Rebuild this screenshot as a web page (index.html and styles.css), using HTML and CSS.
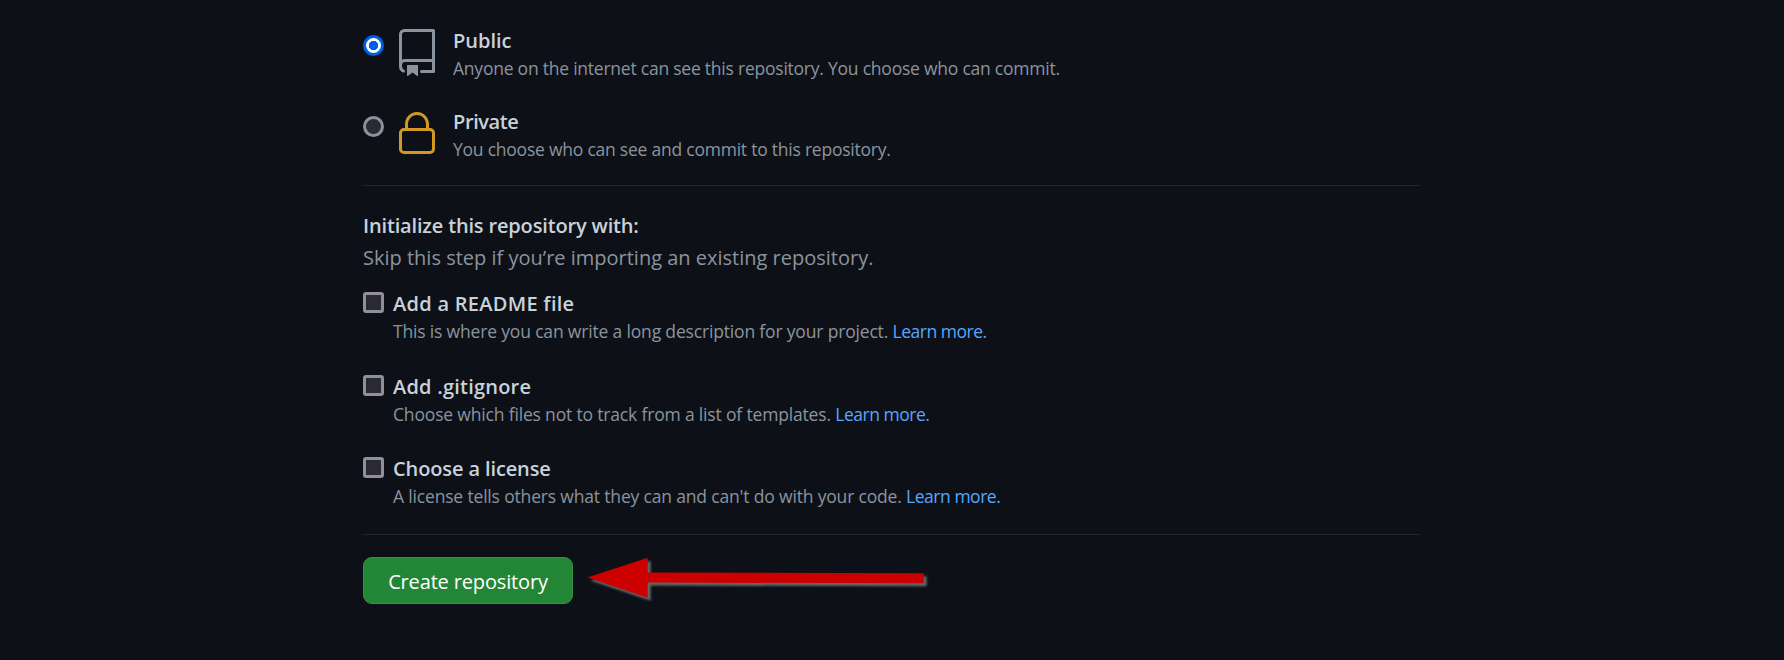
FILE: index.html
```
<!DOCTYPE html>
<html lang="en">
<head>
<meta charset="utf-8">
<title>Create a new repository</title>
<link rel="stylesheet" href="styles.css">
</head>
<body>
<main class="form">
  <section class="visibility">
    <label class="choice">
      <input class="radio" type="radio" name="visibility" checked>
      <svg class="icon icon-repo" viewBox="0 0 24 24" aria-hidden="true"><path fill-rule="evenodd" d="M3 2.75A2.75 2.75 0 015.75 0h14.5a.75.75 0 01.75.75v20.5a.75.75 0 01-.75.75h-6a.75.75 0 010-1.5h5.25v-4H6A1.5 1.5 0 004.5 18v.75c0 .716.43 1.334 1.05 1.605a.75.75 0 01-.6 1.374A3.25 3.25 0 013 18.75v-16zM19.5 1.5V15H6c-.546 0-1.059.146-1.5.401V2.75c0-.69.56-1.25 1.25-1.25H19.5z"/><path d="M7 18.25a.25.25 0 01.25-.25h5a.25.25 0 01.25.25v5.01a.25.25 0 01-.397.201l-2.206-1.604a.25.25 0 00-.294 0L7.397 23.46a.25.25 0 01-.397-.2v-5.01z"/></svg>
      <span class="copy">
        <span class="title">Public</span>
        <span class="note">Anyone on the internet can see this repository. You choose who can commit.</span>
      </span>
    </label>
    <label class="choice">
      <input class="radio" type="radio" name="visibility">
      <svg class="icon icon-lock" viewBox="0 0 24 24" aria-hidden="true"><path fill-rule="evenodd" d="M6 9V7.25C6 3.845 8.503 1 12 1s6 2.845 6 6.25V9h.5a2.5 2.5 0 012.5 2.5v8a2.5 2.5 0 01-2.5 2.5h-13A2.5 2.5 0 013 19.5v-8A2.5 2.5 0 015.5 9H6zm1.5-1.75C7.5 4.58 9.422 2.5 12 2.5c2.578 0 4.5 2.08 4.5 4.75V9h-9V7.25zm-3 4.25a1 1 0 011-1h13a1 1 0 011 1v8a1 1 0 01-1 1h-13a1 1 0 01-1-1v-8z"/></svg>
      <span class="copy">
        <span class="title title-private">Private</span>
        <span class="note">You choose who can see and commit to this repository.</span>
      </span>
    </label>
  </section>
  <section class="initialize">
    <h2 class="title title-heading">Initialize this repository with:</h2>
    <p class="hint">Skip this step if you’re importing an existing repository.</p>
    <div class="option option-first">
      <input class="checkbox" type="checkbox" id="readme">
      <div class="copy">
        <label class="title title-readme" for="readme">Add a README file</label>
        <p class="note">This is where you can write a long description for your project. <a class="link">Learn more.</a></p>
      </div>
    </div>
    <div class="option">
      <input class="checkbox" type="checkbox" id="gitignore">
      <div class="copy">
        <label class="title title-gitignore" for="gitignore">Add .gitignore</label>
        <p class="note">Choose which files not to track from a list of templates. <a class="link">Learn more.</a></p>
      </div>
    </div>
    <div class="option">
      <input class="checkbox" type="checkbox" id="license">
      <div class="copy">
        <label class="title title-license" for="license">Choose a license</label>
        <p class="note">A license tells others what they can and can't do with your code. <a class="link">Learn more.</a></p>
      </div>
    </div>
  </section>
  <div class="actions">
    <button class="submit" type="button">Create repository</button>
    <svg class="arrow" viewBox="0 0 348 52" aria-hidden="true"><path d="M.5 20.5L60.7 .7V15.5L336.7 16.2V26.3L60.7 25.6V40.7Z"/></svg>
  </div>
</main>
</body>
</html>
```
FILE: styles.css
```
* { box-sizing: border-box; }

body {
  margin: 0;
  background: #0d1117;
  color: #c9d1d9;
  font-family: "Open Sans", "Noto Sans", sans-serif;
}

h2, p { margin: 0; }

.form {
  width: 1057px;
  height: 660px;
  margin-left: 363px;
  padding-top: 24px;
  overflow: hidden;
}

.visibility {
  height: 162px;
  border-bottom: 1px solid #21262d;
}

.choice {
  display: flex;
  height: 81px;
}

.copy, .title, .note { display: block; }

.title {
  height: 31px;
  font-size: 20px;
  font-weight: 600;
  line-height: 34px;
  white-space: nowrap;
}

.title-private { letter-spacing: -0.4px; }
.title-heading { letter-spacing: -0.16px; }
.title-readme { letter-spacing: 0.28px; }
.title-gitignore { letter-spacing: 0.22px; }
.title-license { letter-spacing: -0.12px; }

.note {
  height: 27px;
  color: #8b949e;
  font-size: 17.5px;
  letter-spacing: -0.23px;
  line-height: 27px;
  white-space: nowrap;
}

.option .note { letter-spacing: -0.17px; }

.note .link {
  color: #58a6ff;
  letter-spacing: -0.47px;
}

.radio, .checkbox {
  flex: none;
  appearance: none;
  width: 21px;
  height: 21px;
  margin: 11px 0 0;
  border: 3px solid #8f8f9d;
  background: #2b2a33;
}

.radio { border-radius: 50%; }

.radio:checked {
  border-color: #0060df;
  background: radial-gradient(circle, #0060df 4.4px, #fff 5px);
}

.icon {
  flex: none;
  width: 48px;
  height: 48px;
  margin: 5px 12px 0 9px;
}

.icon-repo { fill: #8b949e; }
.icon-lock { fill: #d29922; }

.initialize {
  height: 349px;
  padding-top: 23px;
  border-bottom: 1px solid #21262d;
}

.hint {
  height: 47px;
  color: #8b949e;
  font-size: 20px;
  line-height: 36px;
}

.option {
  display: flex;
  gap: 9px;
  height: 82px;
}

.option-first { height: 83px; }

.option .checkbox {
  margin-top: 5px;
  border-radius: 3px;
}

.actions {
  display: flex;
  gap: 14px;
  padding-top: 22px;
}

.submit {
  width: 210px;
  height: 47px;
  padding: 2px 0 0;
  border: 1px solid #38914a;
  border-radius: 9px;
  background: #238636;
  color: #fff;
  font: 20px/43px "Open Sans", "Noto Sans", sans-serif;
  letter-spacing: -0.15px;
}

.arrow {
  width: 348px;
  height: 52px;
  fill: #cc0000;
  filter: drop-shadow(3px 3px 1px #666);
}
```
